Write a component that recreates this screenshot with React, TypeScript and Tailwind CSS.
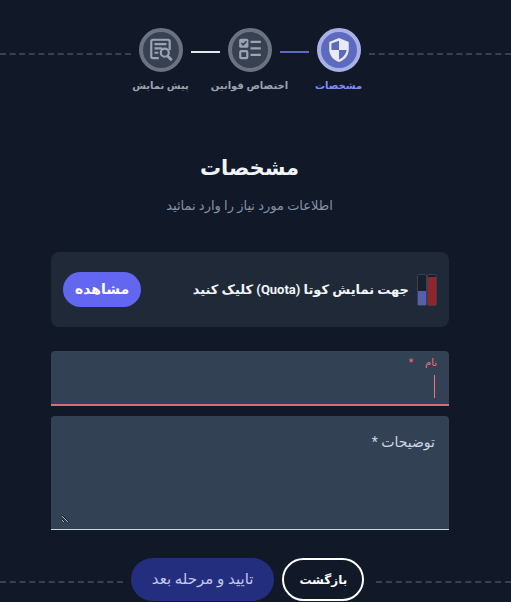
import type { ReactNode } from 'react'
import { clsx } from 'clsx'

function ShieldIcon() {
  return (
    <svg viewBox="0 0 24 24" className="size-[26px]" fill="none" aria-hidden="true">
      <path d="M12 1 3 4.500v7c0 5.300 3.800 9.800 9 11.500 5.200-1.700 9-6.200 9-11.500v-7z" fill="#e8ebf5" />
      <path d="M12 3.500V12H5V6zM12 12h7c-.5 4-3.300 7.300-7 8.800z" fill="#5c6bc0" />
    </svg>
  )
}

function RulesIcon() {
  return (
    <svg viewBox="0 0 24 24" className="size-[26px]" fill="none" stroke="#9aa5b4" strokeWidth="2" aria-hidden="true">
      <rect x="2" y="1.500" width="8.500" height="8.500" rx="1.500" fill="#9aa5b4" stroke="none" />
      <path d="m4 5.500 1.700 1.800L8.700 4" stroke="#374151" strokeWidth="1.500" />
      <rect x="3" y="13" width="6.500" height="6.500" rx="1" />
      <path d="M12.500 4.500h9.500M12.500 10.500h9.500M12.500 16.500h9.500" />
    </svg>
  )
}

function PreviewIcon() {
  return (
    <svg viewBox="0 0 24 24" className="size-[26px]" fill="none" stroke="#9aa5b4" strokeWidth="2" aria-hidden="true">
      <path d="M10 19.500H4.500a1.500 1.500 0 0 1-1.500-1.500V4a1.500 1.500 0 0 1 1.500-1.500h14A1.500 1.500 0 0 1 20 4v8" />
      <path d="M6 6.500h11M6 10.500h7M6 14.500h3.500" />
      <circle cx="15.500" cy="14.500" r="3.700" />
      <path d="m18 17.500 4 4" strokeWidth="2.500" />
    </svg>
  )
}

interface StepProps {
  label: string
  active?: boolean
  children: ReactNode
}

function Step({ label, active = false, children }: StepProps) {
  return (
    <li className="flex w-11 flex-col items-center gap-1">
      <span
        className={clsx(
          'flex size-11 items-center justify-center rounded-full border-4',
          active ? 'border-[#a9b1e6] bg-[#5c6bc0]' : 'border-[#6b7280] bg-[#374151]',
        )}
      >
        {children}
      </span>
      <span
        className={clsx(
          'text-[10px] leading-5 font-bold whitespace-nowrap',
          active ? 'text-[#818cf8]' : 'text-[#9ca3af]',
        )}
      >
        {label}
      </span>
    </li>
  )
}

interface DashedLineProps {
  bleed?: boolean
  className?: string
}

// bleed lets the line run through the page's start padding to the window edge
function DashedLine({ bleed = false, className }: DashedLineProps) {
  return (
    <div className={clsx('flex-1', className)}>
      <div className={clsx('border-t-2 border-dashed border-[#374151]', bleed && '-mr-3')} />
    </div>
  )
}

function Stepper() {
  return (
    <div className="flex items-start gap-2">
      <DashedLine bleed className="mt-[25px]" />
      <ol className="flex items-start gap-2">
        <Step label="مشخصات" active>
          <ShieldIcon />
        </Step>
        <li className="mt-[23px] w-[29px] border-t-2 border-[#5c6bc0]" />
        <Step label="اختصاص قوانین">
          <RulesIcon />
        </Step>
        <li className="mt-[23px] w-[29px] border-t-2 border-[#e5e7eb]" />
        <Step label="پیش نمایش">
          <PreviewIcon />
        </Step>
      </ol>
      <DashedLine className="mt-[25px]" />
    </div>
  )
}

function QuotaBars() {
  return (
    <div className="flex h-8" aria-hidden="true">
      <div className="flex w-2.5 flex-col justify-end rounded-xs border border-[#374151] bg-[#18202d]">
        <div className="h-7 bg-[#8f262b]" />
      </div>
      <div className="flex w-2.5 flex-col justify-end rounded-xs border border-[#374151] bg-[#18202d]">
        <div className="h-3.5 bg-[#5361ac]" />
      </div>
    </div>
  )
}

export default function App() {
  return (
    <div
      dir="rtl"
      className="min-h-screen overflow-hidden bg-[#111827] pt-7 pr-3 font-[Roboto,'DejaVu_Sans',sans-serif]"
    >
      <Stepper />

      <header className="mt-14 text-center">
        <h1 className="text-[21px] leading-8 font-bold text-[#f1f5f9]">مشخصات</h1>
        <p className="mt-2.5 text-[13px] leading-6 text-[#8492a6]">اطلاعات مورد نیاز را وارد نمائید</p>
      </header>

      <main className="mt-[34px] pr-[50px] pl-[51px]">
        <section className="flex h-[75px] items-center rounded-lg bg-[#1f2937] px-3">
          <QuotaBars />
          <p className="mr-2 text-[13px] font-bold whitespace-nowrap text-[#f1f5f9]">
            جهت نمایش کوتا (Quota) کلیک کنید
          </p>
          <button type="button" className="mr-auto h-[35px] rounded-full bg-[#6366f1] px-3 text-[14px] font-bold text-white">
            مشاهده
          </button>
        </section>

        <form className="mt-6">
          <div className="relative h-[55px] rounded-t border-b-2 border-[#dc6b73] bg-[#334155] px-3 pt-1">
            <label htmlFor="name" className="block text-[10px] leading-4 text-[#f87171]">
              نام<span className="mr-3">*</span>
            </label>
            <input id="name" type="text" className="block h-8 w-full bg-transparent text-sm text-white caret-transparent outline-none" />
            <span className="absolute top-6 right-3.5 h-[23px] w-px bg-[#f87171]" />
          </div>

          <div className="relative mt-2.5 h-[114px] rounded-t border-b border-[#cbd5e1] bg-[#334155] px-2.5 pt-4 pb-1.5">
            <label htmlFor="description" className="absolute top-4 right-3.5 text-[14px] leading-5 text-[#cbd5e1]">
              توضیحات *
            </label>
            <textarea id="description" className="block h-full w-full resize bg-transparent text-sm text-white outline-none" />
          </div>
        </form>
      </main>

      <footer className="mt-7 flex items-center gap-2">
        <DashedLine bleed className="mt-1 ml-1" />
        <button type="button" className="h-[43px] rounded-full border-2 border-white px-[15px] text-[12px] font-bold text-white">
          بازگشت
        </button>
        <button type="button" className="h-[43px] rounded-full bg-[#232f7e] px-[21px] text-[15px] text-[#c3c8ea]">
          تایید و مرحله بعد
        </button>
        <DashedLine className="mt-1" />
      </footer>
    </div>
  )
}
